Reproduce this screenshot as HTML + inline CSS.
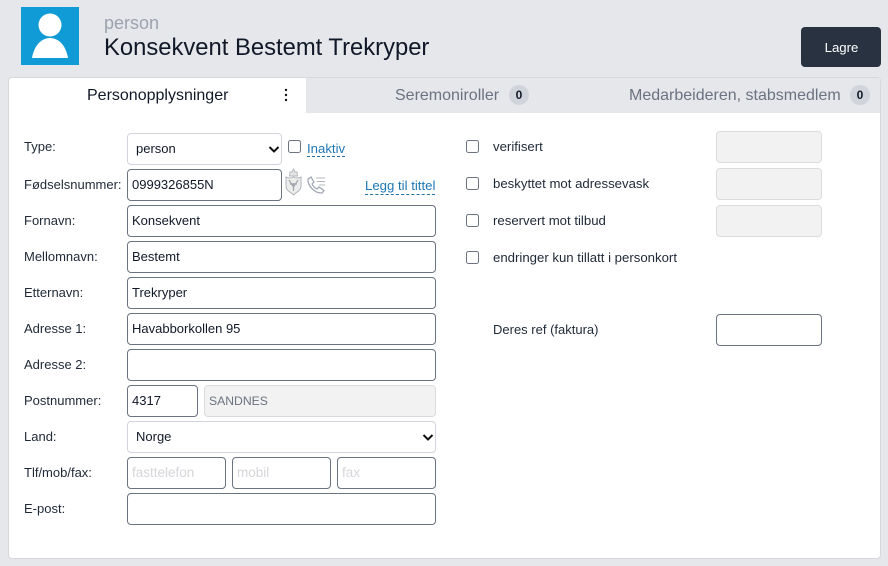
<!DOCTYPE html>
<html><head><meta charset="utf-8">
<style>
html,body{margin:0;padding:0}
body{width:888px;height:566px;background:#e5e7eb;position:relative;overflow:hidden;font-family:"Liberation Sans",sans-serif;color:#111827}
div,span{position:absolute;box-sizing:border-box}
.t{white-space:nowrap;font-size:13px;line-height:16px;color:#1f2937}
.r{font-size:13.2px}
.i{left:127px;width:309px;height:32px;background:#fff;border:1px solid #6b7280;border-radius:4px;font-size:13px;line-height:30px;padding-left:4px;color:#111827;white-space:nowrap}
.s{border-color:#d1d5db;padding-left:8px}
.d{background:#f2f2f2;border:1px solid #dcdcdc;border-radius:4px}
.c{width:13px;height:13px;border:1px solid #6b7280;border-radius:2.5px;background:#fff}
.p{font-size:13.5px}
.b{width:20px;height:20px;border-radius:10px;background:#d1d5db;font-size:12px;font-weight:bold;line-height:20px;text-align:center;color:#111827}
.l{color:#1f77b4;border-bottom:1px dashed #1f6f9f;white-space:nowrap;font-size:13.2px}
svg{position:absolute}
</style></head><body>
<div style="left:21px;top:7px;width:58px;height:58px;background:#119bd6"></div>
<svg style="left:21px;top:7px" width="58" height="58" viewBox="0 0 58 58"><circle cx="29" cy="18" r="11.5" fill="#fff"/><path d="M11 51 C13 39 20 31 29 31 C38 31 45 39 47 51 Z" fill="#fff"/></svg>
<span class="t" style="left:104px;top:13px;font-size:18px;line-height:20px;color:#9ca3af">person</span>
<span class="t" style="left:104px;top:34px;font-size:23.800px;line-height:28px;color:#111827">Konsekvent Bestemt Trekryper</span>
<div style="left:801px;top:27px;width:80px;height:40px;background:#283241;border-radius:4px;color:#fff;font-size:13.200px;line-height:41px;text-align:center;padding-left:1px">Lagre</div>

<div style="left:8px;top:77px;width:873px;height:482px;background:#fff;border:1px solid #d6d8dc;border-radius:4px"></div>
<div style="left:306px;top:78px;width:574px;height:35px;background:#e5e7eb"></div>
<span class="t" style="left:87px;top:87px;font-size:16px;line-height:18px;color:#111827">Personopplysninger</span>
<svg style="left:281px;top:87px" width="10" height="16"><circle cx="5" cy="3" r="1.2" fill="#111"/><circle cx="5" cy="8" r="1.2" fill="#111"/><circle cx="5" cy="13" r="1.2" fill="#111"/></svg>
<span class="t" style="left:395px;top:87px;font-size:16px;line-height:18px;color:#6b7280">Seremoniroller</span>
<span class="b" style="left:509px;top:85px">0</span>
<span class="t" style="left:629px;top:87px;font-size:16px;line-height:18px;color:#6b7280">Medarbeideren, stabsmedlem</span>
<span class="b" style="left:850px;top:85px">0</span>

<span class="t" style="left:24px;top:139px">Type:</span>
<span class="t" style="left:24px;top:177px">Fødselsnummer:</span>
<span class="t" style="left:24px;top:213px">Fornavn:</span>
<span class="t" style="left:24px;top:249px">Mellomnavn:</span>
<span class="t" style="left:24px;top:285px">Etternavn:</span>
<span class="t" style="left:24px;top:321px">Adresse 1:</span>
<span class="t" style="left:24px;top:357px">Adresse 2:</span>
<span class="t" style="left:24px;top:393px">Postnummer:</span>
<span class="t" style="left:24px;top:429px">Land:</span>
<span class="t" style="left:24px;top:465px">Tlf/mob/fax:</span>
<span class="t" style="left:24px;top:501px">E-post:</span>

<div class="i s" style="top:133px;width:155px">person</div>
<svg style="left:268px;top:145px" width="12" height="9"><path d="M1.5 2 L6 6.5 L10.5 2" fill="none" stroke="#111" stroke-width="2"/></svg>
<div class="c" style="left:288px;top:140px"></div>
<span class="l" style="left:307px;top:141px;line-height:15px">Inaktiv</span>

<div class="i" style="top:169px;width:155px">0999326855N</div>
<svg style="left:285px;top:168px" width="17" height="28" viewBox="0 0 17 28"><path d="M1 9 Q5 11 8.500 9 Q12 11 16 9 V18 C16 23 11 24 8.500 27 C6 24 1 23 1 18 Z" fill="#eceded" stroke="#b3b6bb" stroke-width="1"/><path d="M4.500 8 L5 4 L7 4 L8.500 1 L10 4 L12 4 L12.500 8 Z" fill="#e4e5e7" stroke="#b3b6bb" stroke-width=".9"/><path d="M4 12 L8.500 19 L13 12 M8.500 15 V23 M5 16 H12" fill="none" stroke="#a2a6ac" stroke-width="1.200"/></svg>
<svg style="left:306px;top:175px" width="20" height="20" viewBox="0 0 20 20"><path d="M2 4 L5 2 L8 7 L6 9 C7 11 9 13 11 14 L13 12 L18 15.500 L16 18 C9 18.500 1.500 11 2 4 Z" fill="none" stroke="#9ca3af" stroke-width="1.200"/><path d="M10 3 H19 M11 6.500 H19 M13 10 H19" stroke="#b4b8be" stroke-width="1.100"/></svg>
<span class="l" style="left:365px;top:177px;line-height:17px">Legg til tittel</span>

<div class="i" style="top:205px">Konsekvent</div>
<div class="i" style="top:241px">Bestemt</div>
<div class="i" style="top:277px">Trekryper</div>
<div class="i" style="top:313px">Havabborkollen 95</div>
<div class="i" style="top:349px"></div>
<div class="i" style="top:385px;width:71px">4317</div>
<div class="d" style="left:204px;top:385px;width:232px;height:32px;font-size:12.200px;line-height:30px;padding-left:4px;color:#6b7280">SANDNES</div>
<div class="i s" style="top:421px">Norge</div>
<svg style="left:422px;top:433px" width="12" height="9"><path d="M1.5 2 L6 6.5 L10.5 2" fill="none" stroke="#111" stroke-width="2"/></svg>
<div class="i p" style="top:457px;width:99px;color:#d4d6da">fasttelefon</div>
<div class="i p" style="left:232px;top:457px;width:99px;color:#d4d6da">mobil</div>
<div class="i p" style="left:337px;top:457px;width:99px;color:#d4d6da">fax</div>
<div class="i" style="top:493px"></div>

<div class="c" style="left:466px;top:140px"></div>
<div class="c" style="left:466px;top:177px"></div>
<div class="c" style="left:466px;top:214px"></div>
<div class="c" style="left:466px;top:251px"></div>
<span class="t r" style="left:493px;top:139px">verifisert</span>
<span class="t r" style="left:493px;top:176px">beskyttet mot adressevask</span>
<span class="t r" style="left:493px;top:213px">reservert mot tilbud</span>
<span class="t r" style="left:493px;top:250px">endringer kun tillatt i personkort</span>
<span class="t" style="left:493px;top:322px">Deres ref (faktura)</span>
<div class="d" style="left:716px;top:131px;width:106px;height:32px"></div>
<div class="d" style="left:716px;top:168px;width:106px;height:32px"></div>
<div class="d" style="left:716px;top:205px;width:106px;height:32px"></div>
<div class="i" style="left:716px;top:314px;width:106px"></div>
</body></html>
